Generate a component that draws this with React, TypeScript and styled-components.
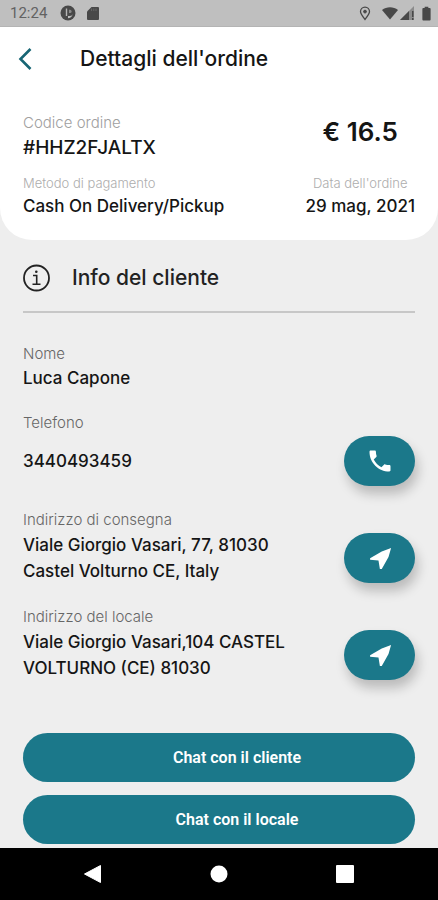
import React from "react";
import styled, { createGlobalStyle } from "styled-components";

const teal = "#1b788a";

const GlobalStyle = createGlobalStyle`
  *, *::before, *::after { box-sizing: border-box; }
  body {
    margin: 0;
    background: #eeeeee;
    color: #151515;
    font-family: Inter, "Open Sans", sans-serif;
  }
  h1, h2, dl, dt, dd, p { margin: 0; }
  button { border: 0; padding: 0; font: inherit; cursor: pointer; }
  svg { display: block; }
`;

const Screen = styled.div`
  display: flex;
  flex-direction: column;
  min-height: 100vh;
`;

const StatusBar = styled.div`
  display: flex;
  align-items: center;
  justify-content: space-between;
  height: 27px;
  padding: 0 6px 0 10px;
  background: #bfbfbf;
  color: #484848;
  border-bottom: 1px solid #b4b4b4;
`;

const StatusGroup = styled.div<{ $gap: number }>`
  display: flex;
  align-items: center;
  gap: ${(p) => p.$gap}px;
`;

const Clock = styled.time`
  margin-right: 2px;
  font: 400 15px/20px Roboto, sans-serif;
  color: #626262;
`;

const OrderCard = styled.header`
  padding: 0 23px 22px;
  background: #ffffff;
  border-radius: 0 0 32px 32px;
`;

const AppBar = styled.div`
  display: flex;
  align-items: center;
  gap: 43px;
  height: 63px;
  margin-left: -10px;
`;

const BackButton = styled.button`
  display: grid;
  place-items: center;
  width: 24px;
  height: 32px;
  background: none;
  color: #176574;
`;

const Title = styled.h1`
  font-size: 21px;
  line-height: 28px;
  font-weight: 500;
  color: #151515;
`;

const Summary = styled.div`
  display: grid;
  grid-template-columns: 1fr auto;
  row-gap: 11px;
  padding-top: 23px;
`;

const SummaryItem = styled.div<{ $centered?: boolean }>`
  text-align: ${(p) => (p.$centered ? "center" : "left")};
`;

const SummaryLabel = styled.p<{ $small?: boolean }>`
  margin-bottom: 1px;
  font-size: ${(p) => (p.$small ? 13 : 15)}px;
  line-height: 20px;
  font-weight: 300;
  color: ${(p) => (p.$small ? "#adadad" : "#a0a0a0")};
`;

const OrderCode = styled.p`
  font-size: 19px;
  line-height: 28px;
  font-weight: 500;
`;

const SummaryValue = styled.p`
  font-size: 17px;
  line-height: 24px;
  font-weight: 500;
`;

const Price = styled.p`
  font-size: 26px;
  line-height: 38px;
  font-weight: 600;
  text-align: center;
`;

const Content = styled.main`
  flex: 1;
  padding: 24px 23px 4px;
`;

const SectionHeading = styled.div`
  display: flex;
  align-items: center;
  gap: 21px;
  padding-bottom: 19px;
  border-bottom: 2px solid #c7c7c7;
`;

const SectionTitle = styled.h2`
  font-size: 21px;
  line-height: 28px;
  font-weight: 500;
  color: #222222;
`;

const Fields = styled.dl`
  display: grid;
  gap: 23px;
  padding: 31px 0 52px;
`;

const FieldLabel = styled.dt`
  margin-bottom: 2px;
  font-size: 15px;
  line-height: 20px;
  font-weight: 300;
  color: #666666;
`;

const FieldBody = styled.dd<{ $tall?: boolean }>`
  display: flex;
  align-items: center;
  justify-content: space-between;
  gap: 24px;
  min-height: ${(p) => (p.$tall ? 52 : 24)}px;
`;

const FieldValue = styled.span<{ $tall?: boolean }>`
  font-size: 17px;
  line-height: ${(p) => (p.$tall ? 26 : 24)}px;
  font-weight: 500;
`;

const ActionButton = styled.button`
  display: grid;
  place-items: center;
  flex: none;
  width: 71px;
  height: 50px;
  border-radius: 25px;
  background: ${teal};
  color: #ffffff;
  box-shadow: 3px 8px 12px rgba(0, 0, 0, 0.22);
`;

const ChatActions = styled.div`
  display: grid;
  gap: 13px;
`;

const ChatButton = styled.button`
  height: 49px;
  padding-left: 36px;
  border-radius: 25px;
  background: ${teal};
  color: #ffffff;
  && { font: 600 16px/24px Roboto, sans-serif; }
`;

const NavBar = styled.nav`
  display: grid;
  grid-template-columns: repeat(3, 126px);
  justify-content: center;
  height: 52px;
  background: #000000;
`;

const NavButton = styled.button`
  display: grid;
  place-items: center;
  background: none;
  color: #ffffff;
`;

const PhoneIcon = () => (
  <svg width="28" height="28" viewBox="0 0 24 24" fill="currentColor" aria-hidden="true">
    <path d="M6.62 10.79c1.44 2.83 3.76 5.14 6.59 6.59l2.2-2.2c.27-.27.67-.36 1.02-.24 1.12.37 2.33.57 3.57.57.55 0 1 .45 1 1V20c0 .55-.45 1-1 1-9.39 0-17-7.61-17-17 0-.55.45-1 1-1h3.5c.55 0 1 .45 1 1 0 1.25.2 2.45.57 3.57.11.35.03.74-.25 1.02l-2.2 2.2z" />
  </svg>
);

const NavigateIcon = () => (
  <svg width="28" height="28" viewBox="0 0 24 24" fill="currentColor" aria-hidden="true">
    <path d="M21.500 3.500L13.500 6.500L3.500 12.300v1.300l7.200.500L11.900 21.500h1.600l5.800-10.300z" />
  </svg>
);

type FieldProps = {
  label: string;
  lines: string[];
  action?: { name: string; icon: React.ReactNode };
};

const Field = ({ label, lines, action }: FieldProps) => (
  <div>
    <FieldLabel>{label}</FieldLabel>
    <FieldBody $tall={!!action}>
      <FieldValue $tall={!!action}>
        {lines.map((line, i) => (
          <React.Fragment key={line}>
            {i > 0 && <br />}
            {line}
          </React.Fragment>
        ))}
      </FieldValue>
      {action && <ActionButton aria-label={action.name}>{action.icon}</ActionButton>}
    </FieldBody>
  </div>
);

export default function App() {
  return (
    <>
      <GlobalStyle />
      <Screen>
        <StatusBar>
          <StatusGroup $gap={11}>
            <Clock>12:24</Clock>
            <svg width="16" height="16" viewBox="0 0 16 16" aria-hidden="true">
              <circle cx="8" cy="8" r="7.500" fill="currentColor" />
              <path d="M5.800 3.500h1.400v7.500H5.800z" fill="#b5b5b5" />
              <path d="M8 11h1.500a3.500 3.500 0 0 0 3.500-3.500c0 3.300-1.800 5.500-5 5.800z" fill="#bfbfbf" />
              <path d="M9 4.800h1a1.600 1.600 0 0 1 0 3.200H9z" fill="#8a8a8a" />
            </svg>
            <svg width="12" height="15" viewBox="0 0 12 15" aria-hidden="true">
              <path d="M4.500 1H11a1 1 0 0 1 1 1v11a1 1 0 0 1-1 1H1a1 1 0 0 1-1-1V5.500z" fill="currentColor" />
              <path d="M4.600 2.500v2.500M6.800 2.500v2.500M9 2.500v2.500" stroke="#666666" />
            </svg>
          </StatusGroup>
          <StatusGroup $gap={7}>
            <StatusGroup $gap={11}>
              <svg width="12" height="15" viewBox="0 0 12 15" fill="none" stroke="currentColor" aria-hidden="true">
                <path d="M6 13.500C3.500 10.400 1.500 8 1.500 5.600a4.500 4.500 0 0 1 9 0C10.500 8 8.500 10.400 6 13.500z" strokeWidth="1.300" />
                <circle cx="6" cy="5.600" r="1.400" fill="currentColor" />
              </svg>
              <StatusGroup $gap={2}>
                <svg width="16" height="14" viewBox="0 0 17 14" fill="currentColor" aria-hidden="true">
                  <path d="M0 3.800C4.800 0 12.200 0 17 3.800L8.500 14z" />
                </svg>
                <svg width="14" height="14" viewBox="0 0 14 14" aria-hidden="true">
                  <path d="M14 0v14H0z" fill="#8b8b8b" />
                  <path d="M9 5v9H0zM12 5h1.500v6H12zM12 12h1.500v2H12z" fill="currentColor" />
                </svg>
              </StatusGroup>
            </StatusGroup>
            <svg width="11" height="15" viewBox="2 0 12 15" fill="currentColor" aria-hidden="true">
              <path d="M6 0h4v1.500h1.500a1 1 0 0 1 1 1V14a1 1 0 0 1-1 1h-7a1 1 0 0 1-1-1V2.500a1 1 0 0 1 1-1H6z" />
            </svg>
          </StatusGroup>
        </StatusBar>

        <OrderCard>
          <AppBar>
            <BackButton aria-label="Indietro">
              <svg width="14" height="24" viewBox="0 0 14 24" fill="none" stroke="currentColor" strokeWidth="2.600" aria-hidden="true">
                <path d="M12.500 2L2.500 12l10 10" />
              </svg>
            </BackButton>
            <Title>Dettagli dell'ordine</Title>
          </AppBar>
          <Summary>
            <SummaryItem>
              <SummaryLabel>Codice ordine</SummaryLabel>
              <OrderCode>#HHZ2FJALTX</OrderCode>
            </SummaryItem>
            <Price>€ 16.5</Price>
            <SummaryItem>
              <SummaryLabel $small>Metodo di pagamento</SummaryLabel>
              <SummaryValue>Cash On Delivery/Pickup</SummaryValue>
            </SummaryItem>
            <SummaryItem $centered>
              <SummaryLabel $small>Data dell'ordine</SummaryLabel>
              <SummaryValue>29 mag, 2021</SummaryValue>
            </SummaryItem>
          </Summary>
        </OrderCard>

        <Content>
          <SectionHeading>
            <svg width="28" height="28" viewBox="0 0 28 28" fill="none" stroke="#222222" aria-hidden="true">
              <circle cx="13.500" cy="14" r="12.500" strokeWidth="1.800" />
              <path d="M10 11.500h3.700V20M9.500 20.200h8" strokeWidth="1.600" />
              <circle cx="13.300" cy="7.800" r="1.300" fill="#222222" stroke="none" />
            </svg>
            <SectionTitle>Info del cliente</SectionTitle>
          </SectionHeading>
          <Fields>
            <Field label="Nome" lines={["Luca Capone"]} />
            <Field
              label="Telefono"
              lines={["3440493459"]}
              action={{ name: "Chiama il cliente", icon: <PhoneIcon /> }}
            />
            <Field
              label="Indirizzo di consegna"
              lines={["Viale Giorgio Vasari, 77, 81030", "Castel Volturno CE, Italy"]}
              action={{ name: "Naviga alla consegna", icon: <NavigateIcon /> }}
            />
            <Field
              label="Indirizzo del locale"
              lines={["Viale Giorgio Vasari,104 CASTEL", "VOLTURNO (CE) 81030"]}
              action={{ name: "Naviga al locale", icon: <NavigateIcon /> }}
            />
          </Fields>
          <ChatActions>
            <ChatButton>Chat con il cliente</ChatButton>
            <ChatButton>Chat con il locale</ChatButton>
          </ChatActions>
        </Content>

        <NavBar>
          <NavButton aria-label="Indietro">
            <svg width="18" height="18" viewBox="0 0 18 18" fill="currentColor" aria-hidden="true">
              <path d="M16.500 0.500v17L0.500 9z" stroke="currentColor" strokeLinejoin="round" />
            </svg>
          </NavButton>
          <NavButton aria-label="Home">
            <svg width="18" height="18" viewBox="0 0 18 18" fill="currentColor" aria-hidden="true">
              <circle cx="9" cy="9" r="8.500" />
            </svg>
          </NavButton>
          <NavButton aria-label="Recenti">
            <svg width="18" height="18" viewBox="0 0 18 18" fill="currentColor" aria-hidden="true">
              <rect width="18" height="18" rx="1" />
            </svg>
          </NavButton>
        </NavBar>
      </Screen>
    </>
  );
}
